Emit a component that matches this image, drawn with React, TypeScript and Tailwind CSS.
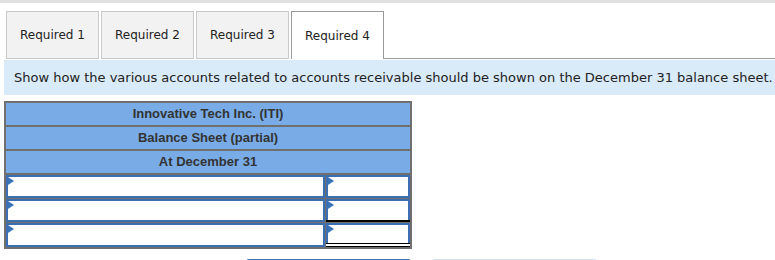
import React from "react";

const tabs = ["Required 1", "Required 2", "Required 3", "Required 4"];
const headerRows = ["Innovative Tech Inc. (ITI)", "Balance Sheet (partial)", "At December 31"];

const Marker = () => (
  <span className="absolute left-0 top-0 h-0 w-0 border-y-[4px] border-l-[6px] border-y-transparent border-l-[#3b73b9]" />
);

const InputCell: React.FC<{ width: string; height: string; under?: "single" | "double" }> = ({ width, height, under }) => (
  <div className={`relative ${width} ${height} bg-white border-2 border-[#3b6fb2]`}>
    <Marker />
    {under === "single" && <span className="absolute left-[-2px] right-[-2px] bottom-[-2px] h-[2px] bg-black" />}
    {under === "double" && (
      <span className="absolute left-[-2px] right-[-2px] bottom-[-4px] h-[4px] border-y border-black bg-white" />
    )}
  </div>
);

export default function App() {
  return (
    <div className="w-[775px] h-[260px] overflow-hidden bg-white" style={{ fontFamily: "'DejaVu Sans', Verdana, sans-serif" }}>
      <div className="h-[3px] bg-[#e0e0e0]" />
      <div className="flex items-end pl-[6px] mt-[8px]">
        {tabs.map((t, i) => {
          const active = i === tabs.length - 1;
          return (
            <div
              key={t}
              className={
                active
                  ? "w-[93px] h-[48px] flex items-center justify-center bg-white border border-b-0 border-[#9a9a9a] text-[12px] text-[#222]"
                  : "w-[93px] h-[48px] mr-[2px] flex items-center justify-center bg-[#f2f2f2] border border-[#c9c9c9] text-[12px] text-[#222]"
              }
            >
              {t}
            </div>
          );
        })}
        <div className="flex-1 border-b border-[#9a9a9a]" />
      </div>
      <div className="ml-[4px] mt-[1px] h-[35px] bg-[#d9ebf9] flex items-center pl-[10px] text-[13px] text-[#222] whitespace-nowrap">
        Show how the various accounts related to accounts receivable should be shown on the December 31 balance sheet.
      </div>
      <div className="ml-[4px] mt-[6px] w-[408px] border-2 border-[#6f6f6f] bg-[#6f6f6f]" style={{ fontFamily: "'Liberation Sans', Arial, sans-serif" }}>
        {headerRows.map((r) => (
          <div key={r} className="h-[22px] mb-[2px] bg-[#79ace6] flex items-center justify-center text-[13px] font-bold text-[#333]">
            {r}
          </div>
        ))}
        <div className="flex flex-col gap-[1px] bg-[#6f6f6f]">
          <div className="flex">
            <InputCell width="w-[319px]" height="h-[23px]" />
            <div className="w-[1px]" />
            <InputCell width="w-[84px]" height="h-[23px]" />
          </div>
          <div className="flex">
            <InputCell width="w-[319px]" height="h-[23px]" />
            <div className="w-[1px]" />
            <InputCell width="w-[84px]" height="h-[23px]" under="single" />
          </div>
          <div className="flex">
            <InputCell width="w-[319px]" height="h-[24px]" />
            <div className="w-[1px]" />
            <InputCell width="w-[84px]" height="h-[22px]" under="double" />
          </div>
        </div>
      </div>
      <div className="flex gap-[21px] pl-[246px] mt-[10px]">
        <div className="w-[165px] h-[20px] rounded-t-[3px] bg-[#3b73b9]" />
        <div className="w-[165px] h-[20px] rounded-t-[3px] bg-[#d5e3f3]" />
      </div>
    </div>
  );
}
